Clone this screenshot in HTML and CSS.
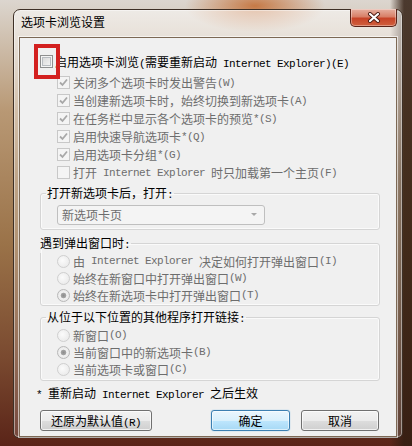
FILE: index.html
```html
<!DOCTYPE html>
<html lang="zh-CN">
<head>
  <meta charset="UTF-8" />
  <title>选项卡浏览设置</title>
  <link rel="stylesheet" href="styles.css">
</head>
<body>

  <div class="window">
    <div class="titlebar">
      <span class="title">选项卡浏览设置</span>
      <span class="close">
        <svg width="14" height="11" viewBox="0 0 14 11">
          <path d="M3 2 L11 9 M11 2 L3 9" stroke="#4a1a12" stroke-width="4" stroke-linecap="round"/>
          <path d="M3 2 L11 9 M11 2 L3 9" stroke="#ffffff" stroke-width="2.2" stroke-linecap="round"/>
        </svg>
      </span>
    </div>

    <div class="client">
      <!-- red box drawn over the first checkbox -->
      <div class="mark"></div>

      <div class="opt main">
        <span class="cb"></span>
        <span>启用选项卡浏览<span class="en">(</span>需要重新启动<span class="en"> Internet Explorer)(E)</span></span>
      </div>

      <div class="sub">
        <div class="opt off"><span class="cb dis on"><svg width="11" height="11" viewBox="0 0 11 11"><path d="M2 5.5 L4.5 8 L9 2.5" fill="none" stroke="#a8a8a8" stroke-width="1.8"/></svg></span>关闭多个选项卡时发出警告<span class="en">(W)</span></div>
        <div class="opt off"><span class="cb dis on"><svg width="11" height="11" viewBox="0 0 11 11"><path d="M2 5.5 L4.5 8 L9 2.5" fill="none" stroke="#a8a8a8" stroke-width="1.8"/></svg></span>当创建新选项卡时，始终切换到新选项卡<span class="en">(A)</span></div>
        <div class="opt off"><span class="cb dis on"><svg width="11" height="11" viewBox="0 0 11 11"><path d="M2 5.5 L4.5 8 L9 2.5" fill="none" stroke="#a8a8a8" stroke-width="1.8"/></svg></span>在任务栏中显示各个选项卡的预览<span class="en">*(S)</span></div>
        <div class="opt off"><span class="cb dis on"><svg width="11" height="11" viewBox="0 0 11 11"><path d="M2 5.5 L4.5 8 L9 2.5" fill="none" stroke="#a8a8a8" stroke-width="1.8"/></svg></span>启用快速导航选项卡<span class="en">*(Q)</span></div>
        <div class="opt off"><span class="cb dis on"><svg width="11" height="11" viewBox="0 0 11 11"><path d="M2 5.5 L4.5 8 L9 2.5" fill="none" stroke="#a8a8a8" stroke-width="1.8"/></svg></span>启用选项卡分组<span class="en">*(G)</span></div>
        <div class="opt off"><span class="cb dis"></span>打开<span class="en"> Internet Explorer </span>时只加载第一个主页<span class="en">(F)</span></div>
      </div>

      <!-- new tab page -->
      <fieldset class="group g1">
        <legend>打开新选项卡后，打开<span class="en">:</span></legend>
        <div class="combo">
          <span>新选项卡页</span>
          <span class="arrow"></span>
        </div>
      </fieldset>

      <!-- popups -->
      <fieldset class="group g2">
        <legend>遇到弹出窗口时<span class="en">:</span></legend>
        <div class="opt off radio-row"><span class="rb"></span>由<span class="en"> Internet Explorer </span>决定如何打开弹出窗口<span class="en">(I)</span></div>
        <div class="opt off radio-row"><span class="rb"></span>始终在新窗口中打开弹出窗口<span class="en">(W)</span></div>
        <div class="opt off radio-row"><span class="rb on"></span>始终在新选项卡中打开弹出窗口<span class="en">(T)</span></div>
      </fieldset>

      <!-- links from other programs -->
      <fieldset class="group g3">
        <legend>从位于以下位置的其他程序打开链接<span class="en">:</span></legend>
        <div class="opt off radio-row"><span class="rb"></span>新窗口<span class="en">(O)</span></div>
        <div class="opt off radio-row"><span class="rb on"></span>当前窗口中的新选项卡<span class="en">(B)</span></div>
        <div class="opt off radio-row"><span class="rb"></span>当前选项卡或窗口<span class="en">(C)</span></div>
      </fieldset>

      <div class="note"><span class="en">* </span>重新启动<span class="en"> Internet Explorer </span>之后生效</div>

      <div class="buttons">
        <button class="btn reset">还原为默认值<span class="en">(R)</span></button>
        <button class="btn ok">确定</button>
        <button class="btn cancel">取消</button>
      </div>
    </div>
  </div>

</body>
</html>
```

FILE: styles.css
```css
body {
  margin: 0;
  width: 412px;
  height: 446px;
  overflow: hidden;
  font-family: "Noto Sans CJK SC", sans-serif;
  font-size: 12px;
  color: #000;
  background:
    radial-gradient(ellipse 70px 26px at 255px 6px, rgba(196, 112, 56, 0.9), rgba(196, 112, 56, 0)),
    linear-gradient(to right, rgba(0, 0, 0, 0) 390px, rgba(50, 30, 18, 0.85) 404px),
    linear-gradient(to bottom, #dcd6cf 0%, #b89874 25%, #9a7248 55%, #7a4a30 80%, #5a2418 100%);
}
.en {
  font-family: "Liberation Mono", monospace;
  font-size: 11px;
  letter-spacing: -0.6px;
  white-space: pre;
}

/* window frame */
.window {
  box-sizing: border-box;
  width: 390px;
  height: 429px;
  margin: 9px 0 0 13px;
  border: 1px solid #3e3026;
  border-radius: 7px 7px 5px 5px;
  background: linear-gradient(to bottom, rgba(255, 255, 255, 0.55), rgba(255, 255, 255, 0.25) 40%, rgba(255, 255, 255, 0.15));
  box-shadow: inset 0 0 0 1px rgba(255, 255, 255, 0.45);
  display: flex;
  flex-direction: column;
}
.titlebar {
  height: 27px;
  display: flex;
  align-items: flex-start;
  justify-content: space-between;
}
.title {
  margin: 4px 0 0 7px;
  line-height: 16px;
  font-size: 12px;
}
.close {
  width: 45px;
  height: 17px;
  margin: -1px 5px 0 0;
  border: 1px solid #5a2318;
  border-top: none;
  border-radius: 0 0 5px 5px;
  background: linear-gradient(to bottom, #e6b0a0 0%, #d88068 45%, #c74428 55%, #d0603e 100%);
  box-shadow: inset 0 0 0 1px rgba(255, 255, 255, 0.35);
  display: flex;
  align-items: center;
  justify-content: center;
}
.close svg {
  display: block;
}

/* client area */
.client {
  position: relative;
  height: 390px;
  margin: 0 5px 0 5px;
  border: 1px solid #7c6854;
  background: #f0f0f0;
  box-shadow: 0 0 0 1px rgba(255, 255, 255, 0.6);
  padding-top: 15px;
  box-sizing: content-box;
}
.client > .mark {
  position: absolute;
  left: 14px;
  top: 6px;
  width: 18px;
  height: 27px;
  border: 4px solid #d3201f;
}

.opt {
  display: flex;
  align-items: center;
  height: 18px;
  white-space: nowrap;
}
.opt.main {
  padding-left: 20px;
}
.opt.off {
  color: #6d6d6d;
}
.sub {
  margin-top: 3px;
  padding-left: 37px;
}

/* checkbox */
.cb {
  box-sizing: border-box;
  width: 13px;
  height: 13px;
  margin-right: 3px;
  flex: none;
  border: 1px solid #8e8f8f;
  background: linear-gradient(135deg, #d4d4d4, #f8f8f8);
  box-shadow: inset 0 0 0 1px #f4f4f4, inset 0 0 0 2px #b8bcc0;
  display: flex;
  align-items: center;
  justify-content: center;
}
.main .cb {
  margin-right: 2px;
}
.cb.dis {
  border-color: #c8c8c8;
  background: #f4f4f4;
  box-shadow: none;
}
.cb svg {
  display: block;
}

/* radio */
.rb {
  box-sizing: border-box;
  width: 13px;
  height: 13px;
  margin-right: 3px;
  flex: none;
  border: 1px solid #cfcfcf;
  border-radius: 50%;
  background: radial-gradient(circle at 40% 40%, #fbfbfb, #e6e6e6);
}
.rb.on {
  border-color: #b8b8b8;
  background: radial-gradient(circle, #8d8d8d 0, #a6a6a6 2.5px, #f2f2f2 3.2px, #e2e2e2 100%);
}

/* group boxes */
.group {
  margin: 3px 16px 0 20px;
  padding: 2px 16px 4px 16px;
  min-width: 0;
  border: 1px solid #d5d5d5;
  border-radius: 3px;
  box-shadow: inset 0 0 0 1px #fafafa;
}
.group legend {
  padding: 0 1px;
  line-height: 16px;
  margin-left: -11px;
}
.group.g2 {
  margin-top: 5px;
  padding: 0 16px 1px 16px;
}
.group.g2 legend {
  margin-left: -18px;
}
.group.g3 {
  margin-top: 3px;
  padding: 0 16px 2px 16px;
}
.radio-row {
  height: 17px;
}

/* dropdown */
.combo {
  box-sizing: border-box;
  width: 208px;
  height: 20px;
  padding: 0 4px;
  border: 1px solid #bfbfbf;
  border-radius: 3px;
  background: #f4f4f4;
  color: #6d6d6d;
  display: flex;
  align-items: center;
  justify-content: space-between;
}
.arrow {
  width: 0;
  height: 0;
  margin-right: 3px;
  border-left: 3px solid transparent;
  border-right: 3px solid transparent;
  border-top: 3px solid #a8a8a8;
}

.note {
  margin-top: 4px;
  padding-left: 16px;
  line-height: 16px;
  white-space: nowrap;
}

/* buttons */
.buttons {
  display: flex;
  margin-top: 7px;
  padding: 0 17px 0 20px;
}
.btn {
  box-sizing: border-box;
  height: 21px;
  padding: 0;
  font-family: "Noto Sans CJK SC", sans-serif;
  font-size: 12px;
  color: #000;
  border: 1px solid #707070;
  border-radius: 3px;
  background: linear-gradient(to bottom, #f2f2f2 0%, #ebebeb 50%, #dddddd 51%, #cfcfcf 100%);
  box-shadow: inset 0 0 0 1px rgba(255, 255, 255, 0.7);
}
.reset {
  width: 112px;
}
.ok {
  width: 79px;
  margin-left: auto;
  border-color: #3c7fb1;
  background: linear-gradient(to bottom, #eaf6fd 0%, #d9f0fc 50%, #bee6fd 51%, #a7d9f5 100%);
  box-shadow: inset 0 0 0 1px rgba(255, 255, 255, 0.6), 0 0 1px #48a6e0;
}
.cancel {
  width: 78px;
  margin-left: 11px;
}
```
